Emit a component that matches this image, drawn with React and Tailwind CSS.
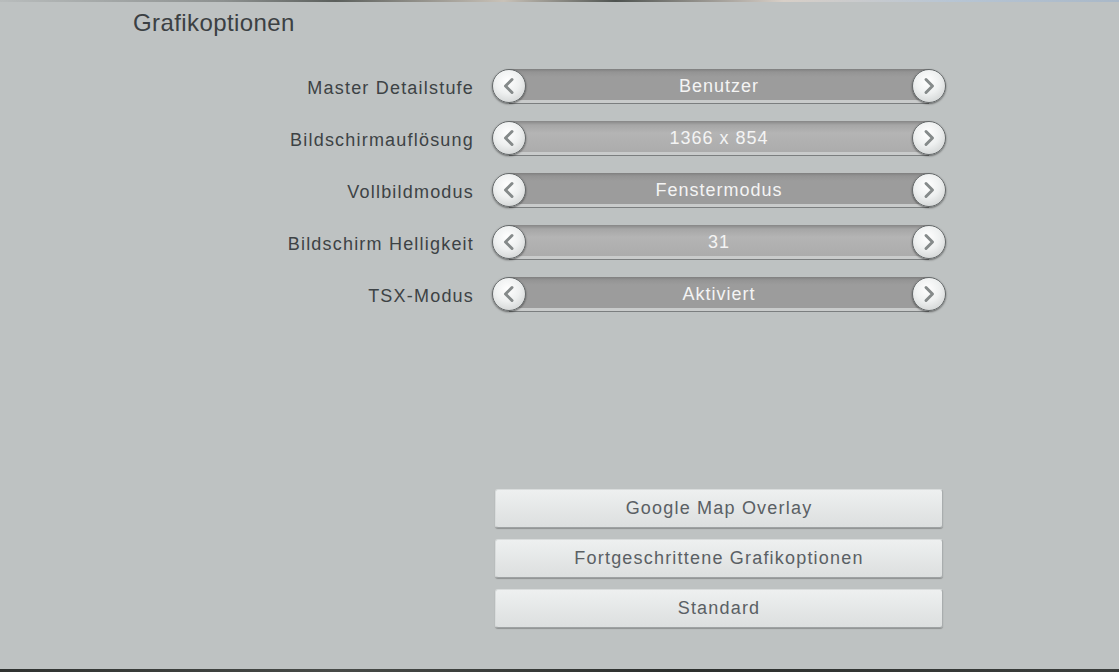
import React from "react";

const rows = [
  { label: "Master Detailstufe", value: "Benutzer", tone: "dark" },
  { label: "Bildschirmauflösung", value: "1366 x 854", tone: "light" },
  { label: "Vollbildmodus", value: "Fenstermodus", tone: "dark" },
  { label: "Bildschirm Helligkeit", value: "31", tone: "light" },
  { label: "TSX-Modus", value: "Aktiviert", tone: "dark" },
];

const buttons = ["Google Map Overlay", "Fortgeschrittene Grafikoptionen", "Standard"];

function RoundArrow({ dir }) {
  return (
    <button className="relative z-10 flex h-[34px] w-[34px] shrink-0 items-center justify-center rounded-full border border-[#65696a] bg-[radial-gradient(circle_at_45%_35%,#ffffff_0%,#eef0f0_45%,#c6c9c9_100%)] shadow-[0_1px_2px_rgba(0,0,0,0.5)]">
      <svg width="16" height="18" viewBox="0 0 16 18">
        <path
          d={dir === "left" ? "M11 2.5 L4.5 9 L11 15.5" : "M5 2.5 L11.5 9 L5 15.5"}
          fill="none"
          stroke="#858a8a"
          strokeWidth="3"
          strokeLinecap="round"
          strokeLinejoin="round"
        />
      </svg>
    </button>
  );
}

function Selector({ value, tone }) {
  const bar =
    tone === "dark"
      ? "bg-[linear-gradient(#7f7f7f_0px,#949494_3px,#9c9c9c_8px,#9c9c9c_100%)]"
      : "bg-[linear-gradient(#868686_0px,#a6a6a6_4px,#b4b4b4_12px,#acacac_100%)]";
  return (
    <div className="flex h-[36px] w-[454px] items-center">
      <RoundArrow dir="left" />
      <div
        className={`-mx-[17px] flex h-[34px] flex-1 items-center justify-center border-b-[3px] border-b-[#c9cbcb] pt-[3px] shadow-[0_1px_0_#7b7e7f] ${bar}`}
      >
        <span className="text-[18px] tracking-[1px] text-[#f4f4f4]">{value}</span>
      </div>
      <RoundArrow dir="right" />
    </div>
  );
}

export default function App() {
  return (
    <div
      className="flex h-[672px] w-[1119px] flex-col overflow-hidden bg-[#bec2c2]"
      style={{ fontFamily: '"Liberation Sans", Arial, sans-serif' }}
    >
      {/* thin strip of the scene above the panel */}
      <div className="h-[2px] bg-[linear-gradient(90deg,#b8bcbc_0%,#8d9190_20%,#5b5f5c_30%,#c9c2b8_45%,#4e5350_55%,#d8cfc7_70%,#b7c5d4_85%,#a9b8c8_100%)]" />

      <div className="flex flex-1 flex-col">
        <h1 className="pl-[133px] pt-[6px] text-[24px] leading-[30px] tracking-[0.4px] text-[#3b4043]">
          Grafikoptionen
        </h1>

        {/* option rows */}
        <div className="mt-[30px] flex flex-col gap-[16px]">
          {rows.map((r) => (
            <div key={r.label} className="flex items-center">
              <div className="w-[474px] pt-[4px] text-right text-[18px] tracking-[1.2px] text-[#3d4245]">
                {r.label}
              </div>
              <div className="ml-[18px]">
                <Selector value={r.value} tone={r.tone} />
              </div>
            </div>
          ))}
        </div>

        {/* action buttons */}
        <div className="ml-[495px] mt-[177px] flex w-[448px] flex-col gap-[11px]">
          {buttons.map((b) => (
            <button
              key={b}
              className="flex h-[39px] items-center justify-center rounded-[3px] border border-[#d9dcdc] border-b-[#9ea2a3] border-r-[#a9adae] bg-[linear-gradient(#eef0f0,#dcdfdf)] text-[18px] tracking-[1.2px] text-[#5a6064] shadow-[0_1px_1px_rgba(0,0,0,0.25)]"
            >
              {b}
            </button>
          ))}
        </div>
      </div>

      <div className="h-[3px] bg-[linear-gradient(90deg,#2f3230,#474a47_30%,#2c2f2d_60%,#3b3e3c)]" />
    </div>
  );
}
